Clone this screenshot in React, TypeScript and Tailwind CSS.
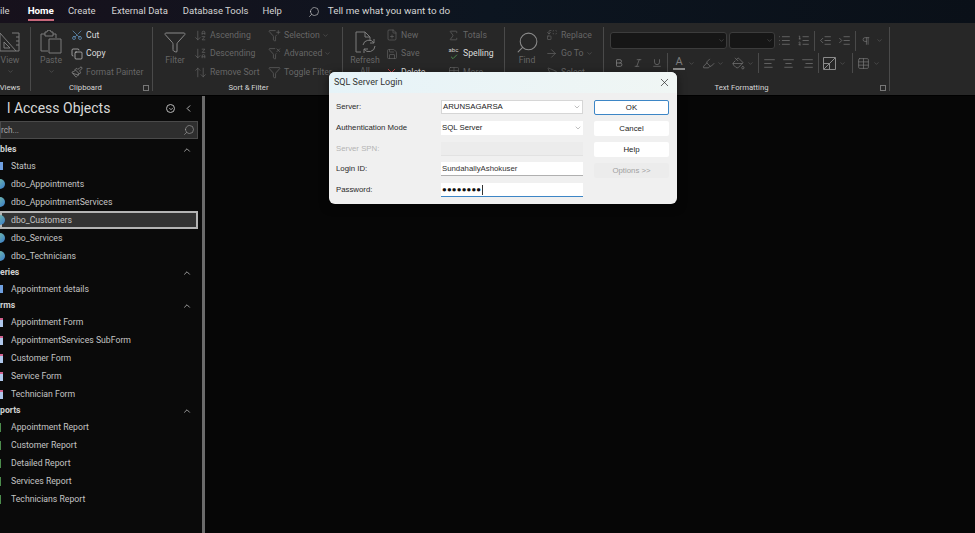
import type { ReactNode } from 'react';
import {
  ArrowRight,
  ChevronDown,
  ChevronLeft,
  ChevronUp,
  Copy,
  Funnel,
  FunnelPlus,
  FunnelX,
  Indent,
  Italic,
  List,
  ListOrdered,
  MousePointer2,
  Outdent,
  Paintbrush,
  PaintBucket,
  Pilcrow,
  Replace,
  Save,
  Scissors,
  Search,
  Sigma,
  Table,
  Underline,
  X,
  AlignCenter,
  AlignLeft,
  AlignRight,
  ArrowDownAZ,
  ArrowDownZA,
  ArrowUpDown,
  Bold,
  Check,
  FilePlus,
  Highlighter,
} from 'lucide-react';

const DIM = 'text-[#666666]';
const BRIGHT = 'text-[#dcdcdc]';

function Caret({ className = '' }: { className?: string }) {
  return <ChevronDown size={7} strokeWidth={1.5} className={`shrink-0 text-[#6f6f6f] ${className}`} />;
}

function RibbonGroup({
  className,
  label,
  labelClass = '',
  launcher,
  children,
}: {
  className: string;
  label?: string;
  labelClass?: string;
  launcher?: boolean;
  children: ReactNode;
}) {
  return (
    <div className={`relative flex h-[64px] shrink-0 flex-col border-r border-[#4a4a4a] ${className}`}>
      <div className="flex h-[55px] overflow-hidden">{children}</div>
      <div className={`flex h-[9px] items-center justify-center pt-[3px] text-[7.7px] leading-none text-[#d6d6d6] ${labelClass}`}>
        {label}
      </div>
      {launcher && (
        <div className="absolute bottom-0 right-[3px] h-[6px] w-[6px] border border-[#777]" />
      )}
    </div>
  );
}

function SmallBtn({
  icon,
  label,
  bright,
  caret,
}: {
  icon: ReactNode;
  label: string;
  bright?: boolean;
  caret?: boolean;
}) {
  return (
    <div className={`flex h-[18.5px] items-center whitespace-nowrap text-[8.7px] ${bright ? BRIGHT : DIM}`}>
      <span className="flex w-[17px] shrink-0 items-center justify-center pr-[2px]">{icon}</span>
      <span>{label}</span>
      {caret && <Caret className="ml-[2px]" />}
    </div>
  );
}

function BigBtn({
  icon,
  label,
  className,
  children,
}: {
  icon: ReactNode;
  label: string;
  className: string;
  children?: ReactNode;
}) {
  return (
    <div className={`flex shrink-0 flex-col items-center pt-[2px] text-[8.7px] leading-[11px] ${DIM} ${className}`}>
      <div className="flex h-[26px] items-center">{icon}</div>
      <span>{label}</span>
      {children}
    </div>
  );
}

function Cell({ children, className = 'w-[19px]' }: { children: ReactNode; className?: string }) {
  return <span className={`flex shrink-0 items-center justify-center text-[#7d7d7d] ${className}`}>{children}</span>;
}

function Sep() {
  return <span className="mx-[1px] h-[20px] w-px shrink-0 bg-[#4a4a4a]" />;
}

function Ribbon() {
  return (
    <div className="flex h-[72px] shrink-0 items-start bg-[#272727] pt-[4px]">
      <RibbonGroup className="w-[31px]" label="Views" labelClass="pr-[10px]">
        <BigBtn
          className="ml-[-3px] w-[26px]"
          label="View"
          icon={
            <svg width="22" height="22" viewBox="0 0 22 22" fill="none" stroke="#7d7d7d" strokeWidth="1">
              <path d="M1 2 L17 20 L1 20 Z M5 11 L5 17 L11 17 Z" />
              <path d="M13 2 h7 v18 h-3 M20 6 h-3 M20 10 h-3 M20 14 h-3" />
            </svg>
          }
        >
          <Caret className="mt-[2px]" />
        </BigBtn>
      </RibbonGroup>

      <RibbonGroup className="w-[122px]" label="Clipboard" labelClass="pr-[12px]" launcher>
        <BigBtn
          className="ml-[5px] mr-[3px] w-[30px]"
          label="Paste"
          icon={
            <svg width="22" height="24" viewBox="0 0 22 24" fill="none" stroke="#7d7d7d" strokeWidth="1">
              <path d="M5 4H1v17h7 M13 4h3v4" />
              <path d="M5 2h2a2 2 0 0 1 4 0h2v4H5z" />
              <path d="M9 9h12v14H9z" />
            </svg>
          }
        >
          <Caret className="mt-[2px]" />
        </BigBtn>
        <div className="mt-[-1px]">
          <SmallBtn bright label="Cut" icon={<Scissors size={12} strokeWidth={1.25} className="-rotate-90 text-[#6fa8dc]" />} />
          <SmallBtn bright label="Copy" icon={<Copy size={12} strokeWidth={1.25} />} />
          <SmallBtn label="Format Painter" icon={<Paintbrush size={12} strokeWidth={1.25} className="text-[#a0a0a0]" />} />
        </div>
      </RibbonGroup>

      <RibbonGroup className="w-[190px]" label="Sort & Filter" labelClass="pl-[2px]">
        <BigBtn
          className="ml-[7px] mr-[3px] w-[30px]"
          label="Filter"
          icon={<Funnel size={24} strokeWidth={1} className="text-[#8a8a8a]" />}
        />
        <div className="mt-[-1px] w-[74px]">
          <SmallBtn label="Ascending" icon={<ArrowDownAZ size={13} strokeWidth={1.25} />} />
          <SmallBtn label="Descending" icon={<ArrowDownZA size={13} strokeWidth={1.25} />} />
          <SmallBtn label="Remove Sort" icon={<ArrowUpDown size={13} strokeWidth={1.25} />} />
        </div>
        <div className="mt-[-1px]">
          <SmallBtn caret label="Selection" icon={<FunnelPlus size={13} strokeWidth={1.25} />} />
          <SmallBtn caret label="Advanced" icon={<FunnelX size={13} strokeWidth={1.25} />} />
          <SmallBtn label="Toggle Filter" icon={<Funnel size={13} strokeWidth={1.25} />} />
        </div>
      </RibbonGroup>

      <RibbonGroup className="w-[162px]">
        <BigBtn
          className="ml-[7px] mr-[4px] w-[30px]"
          label="Refresh"
          icon={
            <svg width="22" height="24" viewBox="0 0 22 24" fill="none" stroke="#7d7d7d" strokeWidth="1">
              <path d="M7 22H2V2h9l5 5v3 M11 2v5h5" />
              <path d="M9 15a6 6 0 0 1 11-2 M21 16a6 6 0 0 1-11 3" />
              <path d="M20 9v4h-4 M10 23v-4h4" />
            </svg>
          }
        >
          <span>All</span>
        </BigBtn>
        <div className="mt-[-1px] w-[62px]">
          <SmallBtn label="New" icon={<FilePlus size={12} strokeWidth={1.25} />} />
          <SmallBtn label="Save" icon={<Save size={12} strokeWidth={1.25} />} />
          <SmallBtn bright label="Delete" icon={<X size={13} strokeWidth={1.5} className="text-[#e05050]" />} />
        </div>
        <div className="mt-[-1px]">
          <SmallBtn label="Totals" icon={<Sigma size={13} strokeWidth={1.25} />} />
          <SmallBtn
            bright
            label="Spelling"
            icon={
              <span className="flex flex-col items-center text-[6px] leading-[6px] text-[#cfcfcf]">
                abc
                <Check size={8} strokeWidth={2} className="text-[#5fb85f]" />
              </span>
            }
          />
          <SmallBtn label="More" icon={<Table size={12} strokeWidth={1.25} />} />
        </div>
      </RibbonGroup>

      <RibbonGroup className="w-[99px]">
        <BigBtn
          className="ml-[7px] mr-[2px] w-[30px]"
          label="Find"
          icon={<Search size={25} strokeWidth={1} className="-scale-x-100 text-[#8a8a8a]" />}
        />
        <div className="mt-[-1px]">
          <SmallBtn label="Replace" icon={<Replace size={12} strokeWidth={1.25} />} />
          <SmallBtn caret label="Go To" icon={<ArrowRight size={13} strokeWidth={1.25} />} />
          <SmallBtn label="Select" icon={<MousePointer2 size={12} strokeWidth={1.25} />} />
        </div>
      </RibbonGroup>

      <RibbonGroup className="w-[286px]" label="Text Formatting" labelClass="pr-[10px]" launcher>
        <div className="flex flex-col pl-[6px] pt-[5px]">
          <div className="flex h-[17px] items-center">
            <div className="flex h-[17px] w-[117px] items-center justify-end rounded-[3px] border border-[#3c3c3c] bg-[#161616] pr-[1px]">
              <Caret />
            </div>
            <div className="ml-[2px] flex h-[17px] w-[46px] items-center justify-end rounded-[3px] border border-[#3c3c3c] bg-[#161616] pr-[1px]">
              <Caret />
            </div>
            <Cell className="w-[19px]"><List size={13} strokeWidth={1.25} /></Cell>
            <Cell className="w-[19px]"><ListOrdered size={13} strokeWidth={1.25} /></Cell>
            <Sep />
            <Cell className="w-[19px]"><Outdent size={13} strokeWidth={1.25} /></Cell>
            <Cell className="w-[19px]"><Indent size={13} strokeWidth={1.25} /></Cell>
            <Sep />
            <Cell className="ml-[2px] w-[14px]"><Pilcrow size={10} strokeWidth={1.5} /></Cell>
            <Caret className="ml-[3px]" />
          </div>
          <div className="ml-[-1px] mt-[4px] flex h-[20px] items-center">
            <Cell><Bold size={10} strokeWidth={2} /></Cell>
            <Cell><Italic size={10} strokeWidth={1.5} /></Cell>
            <Cell><Underline size={10} strokeWidth={1.5} /></Cell>
            <Sep />
            <Cell className="ml-[2px] w-[16px]">
              <span className="border-b-2 border-[#8a8a8a] px-[2px] text-[11px] leading-[12px]">A</span>
            </Cell>
            <Caret className="ml-[1px]" />
            <Cell className="ml-[5px] w-[16px]"><Highlighter size={13} strokeWidth={1.25} /></Cell>
            <Caret className="ml-[1px]" />
            <Cell className="ml-[6px] w-[16px]"><PaintBucket size={13} strokeWidth={1.25} /></Cell>
            <Caret className="ml-[1px]" />
            <span className="w-[3px] shrink-0" />
            <Sep />
            <Cell><AlignLeft size={13} strokeWidth={1.25} /></Cell>
            <Cell><AlignCenter size={13} strokeWidth={1.25} /></Cell>
            <Cell><AlignRight size={13} strokeWidth={1.25} /></Cell>
            <Sep />
            <Cell className="ml-[1px] w-[17px]">
              <svg width="13" height="13" viewBox="0 0 13 13" fill="none" stroke="#8a8a8a">
                <path d="M.5.5h12v12H.5z M1 12 L12 1 M.5 6.5h6v6" />
              </svg>
            </Cell>
            <Caret className="ml-[1px]" />
            <span className="w-[5px] shrink-0" />
            <Sep />
            <Cell className="ml-[1px] w-[17px]"><Table size={13} strokeWidth={1.25} /></Cell>
            <Caret className="ml-[1px]" />
          </div>
        </div>
      </RibbonGroup>
    </div>
  );
}

function MenuBar() {
  const item = 'text-[9.5px] text-[#d4d4d4]';
  return (
    <div className="flex h-[23px] shrink-0 items-center bg-gradient-to-r from-[#17111c] via-[#0c1520] to-[#0a1018]">
      <span className={item}>ile</span>
      <span className="relative ml-[18px] text-[9.8px] font-bold text-white">
        Home
        <span className="absolute bottom-[-2px] left-0 h-[2px] w-full bg-[#c8687a]" />
      </span>
      <span className={`ml-[14px] ${item}`}>Create</span>
      <span className={`ml-[16px] ${item}`}>External Data</span>
      <span className={`ml-[15px] ${item}`}>Database Tools</span>
      <span className={`ml-[14px] ${item}`}>Help</span>
      <Search size={12} strokeWidth={1.25} className="ml-[26px] -scale-x-100 text-[#cfcfcf]" />
      <span className="ml-[8px] text-[9.85px] text-[#d4d4d4]">Tell me what you want to do</span>
    </div>
  );
}

type RowIcon = 'table' | 'linked' | 'form' | 'report';

function NavIcon({ kind }: { kind: RowIcon }) {
  if (kind === 'linked') {
    return <span className="ml-[-5px] h-[10px] w-[10px] rounded-full bg-gradient-to-br from-[#7fc4a0] to-[#3a78c8]" />;
  }
  if (kind === 'table') {
    return <span className="ml-[-5px] h-[8px] w-[8px] border-r-[3px] border-[#6f9fe0] bg-[#c8d8f0]" />;
  }
  if (kind === 'form') {
    return <span className="ml-[-5px] h-[9px] w-[8px] border-t-2 border-[#d0608c] bg-[#b0c8ec]" />;
  }
  return <span className="ml-[-7px] h-[9px] w-[8px] border-r-2 border-[#4c8c4c]" />;
}

function NavRow({ label, icon, selected }: { label: string; icon: RowIcon; selected?: boolean }) {
  return (
    <div
      className={`flex h-[18px] items-center whitespace-nowrap text-[8.7px] text-[#c4c4c4] ${
        selected ? 'border-2 border-[#b4b4b4] bg-[#333333]' : ''
      }`}
    >
      <span className={`flex w-[11px] shrink-0 items-center ${selected ? 'ml-[-2px]' : ''}`}>
        <NavIcon kind={icon} />
      </span>
      <span className="pt-[2px]">{label}</span>
    </div>
  );
}

function NavSection({
  title,
  icon,
  rows,
  selected,
}: {
  title: string;
  icon: RowIcon;
  rows: string[];
  selected?: string;
}) {
  return (
    <div>
      <div className="flex h-[15px] items-center justify-between pr-[6px] text-[8.7px] font-bold text-[#d0d0d0]">
        <span>{title}</span>
        <ChevronUp size={10} strokeWidth={1.75} className="text-[#cfcfcf]" />
      </div>
      {rows.map((r) => (
        <NavRow key={r} label={r} icon={r.startsWith('dbo_') ? 'linked' : icon} selected={r === selected} />
      ))}
    </div>
  );
}

function Sidebar() {
  return (
    <div className="flex h-full w-[205px] shrink-0 border-r-[3px] border-[#6a6a6a] bg-[#0a0a0a]">
      <div className="w-[202px] overflow-hidden">
        <div className="flex h-[25px] items-center justify-between pr-[8px]">
          <span className="ml-[7px] whitespace-nowrap text-[14px] text-[#d8d8d8]">l Access Objects</span>
          <div className="flex items-center gap-[8px]">
            <span className="flex h-[9px] w-[9px] items-center justify-center rounded-full border border-[#b8b8b8]">
              <ChevronDown size={6} strokeWidth={3} className="text-[#d0d0d0]" />
            </span>
            <ChevronLeft size={11} strokeWidth={1.75} className="text-[#d8d8d8]" />
          </div>
        </div>
        <div className="mr-[4px] flex h-[18px] items-center justify-between overflow-hidden border border-[#4a4a4a] bg-[#2e2e2e] pr-[2px] text-[8.2px] text-[#a8a8a8]">
          <span>rch...</span>
          <Search size={12} strokeWidth={1.25} className="-scale-x-100 text-[#a0a0a0]" />
        </div>
        <div className="mr-[4px] mt-[3px]">
          <NavSection
            title="bles"
            icon="table"
            selected="dbo_Customers"
            rows={['Status', 'dbo_Appointments', 'dbo_AppointmentServices', 'dbo_Customers', 'dbo_Services', 'dbo_Technicians']}
          />
          <NavSection title="eries" icon="table" rows={['Appointment details']} />
          <NavSection
            title="rms"
            icon="form"
            rows={['Appointment Form', 'AppointmentServices SubForm', 'Customer Form', 'Service Form', 'Technician Form']}
          />
          <NavSection
            title="ports"
            icon="report"
            rows={['Appointment Report', 'Customer Report', 'Detailed Report', 'Services Report', 'Technicians Report']}
          />
        </div>
      </div>
    </div>
  );
}

function Field({
  label,
  labelClass = 'text-[#2a2a2a]',
  boxClass,
  children,
}: {
  label: string;
  labelClass?: string;
  boxClass: string;
  children?: ReactNode;
}) {
  return (
    <div className="flex h-[14px] items-center">
      <span className={`w-[105px] shrink-0 ${labelClass}`}>{label}</span>
      <div className={`flex h-[14px] w-[142px] items-center justify-between px-[1px] ${boxClass}`}>{children}</div>
    </div>
  );
}

function DialogButton({ label, className = 'bg-white text-[#222]' }: { label: string; className?: string }) {
  return <div className={`flex h-[15px] items-center justify-center rounded-[2px] ${className}`}>{label}</div>;
}

function LoginDialog() {
  return (
    <div className="absolute left-[329px] top-[72px] w-[348px] overflow-hidden rounded-[6px] bg-[#f0f0f0] font-['Liberation_Sans',sans-serif] text-[7.8px] shadow-[0_2px_10px_rgba(0,0,0,0.5)]">
      <div className="flex h-[21px] items-center justify-between bg-gradient-to-r from-[#e6f3f8] to-[#f0f6f4] pl-[5px] pr-[6px]">
        <span className="font-['Roboto',sans-serif] text-[9px] text-[#333]">SQL Server Login</span>
        <X size={13} strokeWidth={1.25} className="text-[#222]" />
      </div>
      <div className="flex pb-[7px] pl-[7px] pr-[8px] pt-[7px]">
        <div className="flex w-[247px] flex-col gap-[6.75px]">
          <Field label="Server:" boxClass="bg-white border border-[#d6d6d6]">
            <span className="text-[#222]">ARUNSAGARSA</span>
            <ChevronDown size={8} strokeWidth={1.25} className="text-[#666]" />
          </Field>
          <Field label="Authentication Mode" boxClass="bg-white">
            <span className="text-[#222]">SQL Server</span>
            <ChevronDown size={8} strokeWidth={1.25} className="text-[#666]" />
          </Field>
          <Field label="Server SPN:" labelClass="text-[#b4b4b4]" boxClass="bg-[#ececec] border-b border-[#e2e2e2]" />
          <Field label="Login ID:" boxClass="bg-white border-b border-[#b0b0b0]">
            <span className="text-[#333]">SundahallyAshokuser</span>
          </Field>
          <Field label="Password:" boxClass="bg-white border-b border-[#3d86c6]">
            <span className="flex items-center text-[#111]">
              <span className="tracking-[0.2px]">●●●●●●●●</span>
              <span className="ml-[1px] h-[10px] w-px bg-[#333]" />
            </span>
          </Field>
        </div>
        <div className="ml-[11px] flex w-[75px] flex-col gap-[6px]">
          <DialogButton label="OK" className="bg-white text-[#222] border border-[#3d86c6]" />
          <DialogButton label="Cancel" />
          <DialogButton label="Help" />
          <DialogButton label="Options >>" className="bg-[#ececec] text-[#a0a0a0]" />
        </div>
      </div>
    </div>
  );
}

export default function App() {
  return (
    <div className="relative flex h-screen w-full flex-col overflow-hidden bg-black font-['Roboto',sans-serif]">
      <MenuBar />
      <Ribbon />
      <div className="flex min-h-0 flex-1 pt-px">
        <Sidebar />
        <div className="flex-1 bg-[#060606]" />
      </div>
      <LoginDialog />
    </div>
  );
}
